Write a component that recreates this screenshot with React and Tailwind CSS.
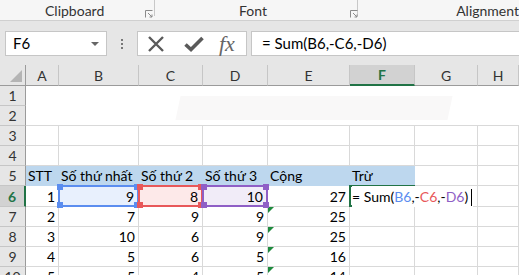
import React from "react";

const FONT = { fontFamily: "Lato, 'Noto Sans', sans-serif" };

const rows = [
  { n: 7, v: ["2", "7", "9", "9", "25"] },
  { n: 8, v: ["3", "10", "6", "9", "25"] },
  { n: 9, v: ["4", "5", "6", "5", "16"] },
  { n: 10, v: ["5", "5", "4", "5", "14"] },
];

const Launcher = () => (
  <svg width="8" height="8" viewBox="0 0 8 8" className="text-[#8a8a8a]">
    <path d="M0.5 7.5V0.5H7.5" fill="none" stroke="currentColor" strokeWidth="1" />
    <path d="M3 3L7 7M7 4.5V7H4.5" fill="none" stroke="currentColor" strokeWidth="1" />
  </svg>
);

// small squares on the corners of a referenced range
const Handles = ({ bg }) => (
  <>
    <span className={`absolute -left-[3px] -top-[3px] w-[6px] h-[6px] ${bg}`} />
    <span className={`absolute -right-[3px] -top-[3px] w-[6px] h-[6px] ${bg}`} />
    <span className={`absolute -left-[3px] -bottom-[3px] w-[6px] h-[6px] ${bg}`} />
    <span className={`absolute -right-[3px] -bottom-[3px] w-[6px] h-[6px] ${bg}`} />
  </>
);

const RowHead = ({ children, active }) => (
  <div
    className={`flex items-center justify-center border-b border-[#c6c6c6] text-[14px] ${
      active
        ? "bg-[#d2d2d2] text-[#217346] font-bold border-r-2 border-r-[#217346]"
        : "bg-[#e6e6e6] text-[#333] border-r border-r-[#9b9b9b]"
    }`}
  >
    {children}
  </div>
);

const Cell = ({ children, className = "" }) => (
  <div
    className={`relative flex items-center justify-end pr-[3px] border-r border-b border-[#d9d9d9] text-[14px] text-black whitespace-nowrap ${className}`}
  >
    {children}
  </div>
);

const ErrTri = () => (
  <span className="absolute left-0 top-0 w-0 h-0 border-t-[6px] border-r-[6px] border-t-[#1e8a3e] border-r-transparent" />
);

export default function App() {
  return (
    <div className="w-[519px] h-[275px] overflow-hidden bg-white select-none" style={FONT}>
      {/* ribbon group labels */}
      <div className="h-[21px] flex bg-[#f6f6f6] border-b border-[#d0d0d0] text-[14px] text-[#333]">
        <div className="w-[158px] relative flex items-center border-r border-[#c8c8c8] mb-[4px]">
          <span className="ml-[45px] mt-[5px]">Clipboard</span>
          <span className="absolute left-[145px] top-[10px]"><Launcher /></span>
        </div>
        <div className="w-[207px] relative flex items-center border-r border-[#c8c8c8] mb-[4px]">
          <span className="ml-[84px] mt-[5px]">Font</span>
          <span className="absolute left-[195px] top-[10px]"><Launcher /></span>
        </div>
        <div className="flex-1 flex items-center">
          <span className="ml-[98px] mt-[1px]">Alignment</span>
        </div>
      </div>

      {/* formula bar */}
      <div className="h-[44px] bg-[#e6e6e6] flex items-start pt-[10px] pl-[5px]">
        <div className="w-[102px] h-[25px] bg-white border border-[#c6c6c6] flex items-center justify-between pl-[7px] pr-[5px] text-[15px] text-black">
          <span>F6</span>
          <span className="w-0 h-0 border-l-[4px] border-r-[4px] border-t-[4px] border-l-transparent border-r-transparent border-t-[#666] mr-[2px]" />
        </div>
        <div className="w-[30px] h-[25px] flex flex-col items-center justify-center gap-[2px]">
          <span className="w-[2px] h-[2px] bg-[#777]" />
          <span className="w-[2px] h-[2px] bg-[#777]" />
          <span className="w-[2px] h-[2px] bg-[#777]" />
        </div>
        <div className="w-[110px] h-[25px] bg-white border border-[#c6c6c6] flex items-center text-[#5a5a5a]">
          <svg width="18" height="18" viewBox="0 0 18 18" className="ml-[9px]">
            <path d="M2 2L16 16M16 2L2 16" stroke="#5a5a5a" strokeWidth="2.4" />
          </svg>
          <svg width="20" height="18" viewBox="0 0 20 18" className="ml-[19px]">
            <path d="M1.5 9.5L7 14.5L18.5 3" fill="none" stroke="#5a5a5a" strokeWidth="3.6" />
          </svg>
          <span
            className="ml-[15px] text-[22px] italic leading-none text-[#666]"
            style={{ fontFamily: "'Liberation Serif', serif" }}
          >
            fx
          </span>
        </div>
        <div className="ml-[4px] flex-1 h-[25px] bg-white border border-r-0 border-[#c6c6c6] flex items-center pl-[10px] text-[15px] text-black">
          = Sum(B6,-C6,-D6)
        </div>
      </div>

      {/* sheet grid */}
      <div className="relative grid grid-cols-[26px_33px_80px_64px_65px_82px_65px_63px_41px] grid-rows-[21px_20px_20px_20px_20px_20px_21px_20px_20px_20px_20px]">
        {/* select-all corner */}
        <div className="relative bg-[#e6e6e6] border-r border-b border-[#9b9b9b]">
          <span className="absolute right-[3px] bottom-[3px] w-0 h-0 border-b-[12px] border-l-[12px] border-b-[#b4b4b4] border-l-transparent" />
        </div>
        {["A", "B", "C", "D", "E", "F", "G", "H"].map((c) => (
          <div
            key={c}
            className={`flex items-center justify-center text-[14px] border-r ${
              c === "F"
                ? "bg-[#d2d2d2] text-[#217346] font-bold border-b-2 border-b-[#217346] border-r-[#c6c6c6]"
                : "bg-[#e6e6e6] text-[#333] border-b border-b-[#9b9b9b] border-r-[#c6c6c6]"
            }`}
          >
            {c}
          </div>
        ))}

        {/* rows 1-2 (merged area) */}
        <RowHead>1</RowHead>
        <div className="col-span-8 row-span-2 relative bg-white border-b border-[#d9d9d9] overflow-hidden">
          <div className="absolute left-[152px] top-[10px] w-[272px] h-[24px] bg-[#f9f8f8] -skew-x-12" />
        </div>
        <RowHead>2</RowHead>

        {/* rows 3-4 */}
        {[3, 4].map((r) => (
          <React.Fragment key={r}>
            <RowHead>{r}</RowHead>
            {Array.from({ length: 8 }).map((_, i) => (
              <Cell key={i} />
            ))}
          </React.Fragment>
        ))}

        {/* row 5 headers */}
        <RowHead>5</RowHead>
        {["STT", "Số thứ nhất", "Số thứ 2", "Số thứ 3", "Cộng", "Trừ"].map((t) => (
          <div
            key={t}
            className="flex items-center pl-[2px] bg-[#bdd7ee] border-r border-b border-[#bdd7ee] text-[14px] text-black whitespace-nowrap"
          >
            {t}
          </div>
        ))}
        <Cell />
        <Cell />

        {/* row 6 (active) */}
        <RowHead active>6</RowHead>
        <Cell>1</Cell>
        <Cell className="bg-[#e8f0fd]">
          <div className="absolute -left-px -top-px -right-px -bottom-px border-2 border-[#5b8def] z-10">
            <Handles bg="bg-[#5b8def]" />
          </div>
          <span className="mr-[1px]">9</span>
        </Cell>
        <Cell className="bg-[#fde9e9]">
          <div className="absolute -left-px -top-px -right-px -bottom-px border-2 border-[#e8585a] z-20">
            <Handles bg="bg-[#e8585a]" />
          </div>
          <span className="mr-[1px]">8</span>
        </Cell>
        <Cell className="bg-[#f1ecf8]">
          <div className="absolute -left-px -top-px -right-px -bottom-px border-2 border-[#8f5fc6] z-30">
            <Handles bg="bg-[#8f5fc6]" />
          </div>
          <span className="mr-[1px]">10</span>
        </Cell>
        <Cell>27</Cell>
        <Cell className="justify-start pl-[2px] overflow-visible z-40">
          <div className="absolute -left-px -top-px -right-px -bottom-px border-2 border-[#217346]" />
          <span className="relative text-[14px] bg-white pr-[1px]">
            = Sum(<span className="text-[#5b8def]">B6</span>,-
            <span className="text-[#e8585a]">C6</span>,-
            <span className="text-[#8f5fc6]">D6</span>)
            <span className="inline-block w-px h-[17px] bg-black align-middle ml-[3px]" />
          </span>
        </Cell>
        <Cell />
        <Cell />

        {/* rows 7-10 */}
        {rows.map((r) => (
          <React.Fragment key={r.n}>
            <RowHead>{r.n}</RowHead>
            {r.v.map((v, i) => (
              <Cell key={i}>
                {i === 4 && <ErrTri />}
                {v}
              </Cell>
            ))}
            <Cell />
            <Cell />
            <Cell />
          </React.Fragment>
        ))}
      </div>
    </div>
  );
}
